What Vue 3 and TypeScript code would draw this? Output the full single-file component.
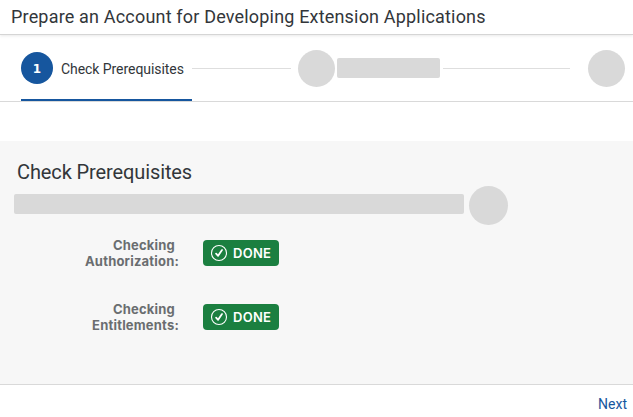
<script setup lang="ts">
interface Check {
  first: string
  second: string
  status: string
}

const checks: Check[] = [
  { first: 'Checking', second: 'Authorization:', status: 'DONE' },
  { first: 'Checking', second: 'Entitlements:', status: 'DONE' },
]
</script>

<template>
  <div class="page">
    <header class="title-bar">
      <h1>Prepare an Account for Developing Extension Applications</h1>
    </header>

    <nav class="wizard">
      <div class="step active">
        <span class="number">1</span>
        <span class="label">Check Prerequisites</span>
      </div>
      <span class="line first"></span>
      <span class="dot"></span>
      <span class="placeholder-label"></span>
      <span class="line second"></span>
      <span class="dot"></span>
    </nav>

    <main class="content">
      <h2>Check Prerequisites</h2>
      <div class="summary">
        <span class="bar"></span>
        <span class="big-dot"></span>
      </div>
      <div v-for="check in checks" :key="check.second" class="row">
        <div class="name">
          <span class="word">{{ check.first }}</span>
          <span>{{ check.second }}</span>
        </div>
        <div class="badge">
          <svg width="18" height="18" viewBox="0 0 18 18">
            <circle cx="9" cy="9" r="7.5" fill="none" stroke="#fff" stroke-width="1.1" />
            <path d="M6.1 9.7 L8.1 11.8 L12 6.1" fill="none" stroke="#fff" stroke-width="1.8" stroke-linecap="round" stroke-linejoin="round" />
          </svg>
          <span class="status">{{ check.status }}</span>
        </div>
      </div>
    </main>

    <footer class="footer">
      <a class="next">Next</a>
    </footer>
  </div>
</template>

<style>
body {
  margin: 0;
  overflow: hidden;
}
</style>

<style scoped>
.page {
  width: 633px;
  height: 417px;
  display: flex;
  flex-direction: column;
  background: #fff;
  color: #32363a;
  font-family: Roboto, "Noto Sans", sans-serif;
  overflow: hidden;
}
.page * {
  box-sizing: border-box;
}
h1,
h2 {
  margin: 0;
  font-weight: 400;
  white-space: nowrap;
}
.title-bar {
  flex: none;
  height: 35px;
  padding-left: 11px;
  border-bottom: 1px solid #d5d5d5;
  box-shadow: 0 1px 3px rgba(0, 0, 0, 0.09);
}
h1 {
  font-size: 18px;
  line-height: 34px;
  letter-spacing: 0.18px;
}
.wizard {
  flex: none;
  height: 67px;
  padding-left: 21px;
  display: flex;
  align-items: center;
  border-bottom: 1px solid #d9d9d9;
}
.step {
  width: 171px;
  height: 66px;
  display: flex;
  align-items: center;
  gap: 8px;
  border-bottom: 2px solid #16569e;
  padding-top: 2px;
}
.number {
  width: 32px;
  height: 32px;
  border-radius: 50%;
  background: #16569e;
  color: #fff;
  font: bold 12px/34px "DejaVu Sans", sans-serif;
  text-align: center;
}
.label {
  font-size: 14px;
  line-height: 18px;
  letter-spacing: -0.06px;
  padding-top: 1px;
  white-space: nowrap;
}
.line {
  height: 1px;
  margin-top: 1px;
  background: #dedede;
}
.line.first {
  width: 99px;
  margin-right: 7px;
}
.line.second {
  width: 127px;
  margin: 1px 18px 0 3px;
}
.dot {
  flex: none;
  width: 37px;
  height: 37px;
  margin-top: 1px;
  border-radius: 50%;
  background: #d9d9d9;
}
.placeholder-label {
  width: 103px;
  height: 20px;
  margin-left: 2px;
  border-radius: 2px;
  background: #d9d9d9;
}
.content {
  flex: none;
  height: 243px;
  margin-top: 39px;
  padding: 18px 0 0 14px;
  background: #f7f7f7;
}
h2 {
  padding-left: 3px;
  font-size: 20px;
  line-height: 27px;
  letter-spacing: -0.11px;
}
.summary {
  display: flex;
  align-items: center;
  gap: 5px;
  height: 39px;
}
.bar {
  width: 450px;
  height: 20px;
  margin-bottom: 3px;
  border-radius: 2px;
  background: #d9d9d9;
}
.big-dot {
  width: 39px;
  height: 39px;
  border-radius: 50%;
  background: #d9d9d9;
}
.row {
  display: flex;
  height: 64px;
  padding-top: 12px;
  gap: 24px;
}
.name {
  width: 165px;
  display: flex;
  flex-direction: column;
  align-items: flex-end;
  color: #6a6d70;
  font-family: Inter, sans-serif;
  font-size: 13px;
  font-weight: 700;
  line-height: 16px;
  letter-spacing: 0.2px;
}
.word {
  margin-right: 4px;
}
.badge {
  width: 76px;
  height: 26px;
  margin-top: 3px;
  padding-left: 7px;
  display: flex;
  align-items: center;
  gap: 5px;
  border-radius: 4px;
  background: #1b7f40;
  color: #fff;
}
.status {
  font-family: Inter, sans-serif;
  font-size: 13px;
  font-weight: 600;
  line-height: 27px;
  letter-spacing: 0.25px;
}
.footer {
  height: 33px;
  border-top: 1px solid #d9d9d9;
  padding-right: 6px;
  text-align: right;
}
.next {
  color: #16569e;
  font-size: 14px;
  line-height: 39px;
}
</style>
